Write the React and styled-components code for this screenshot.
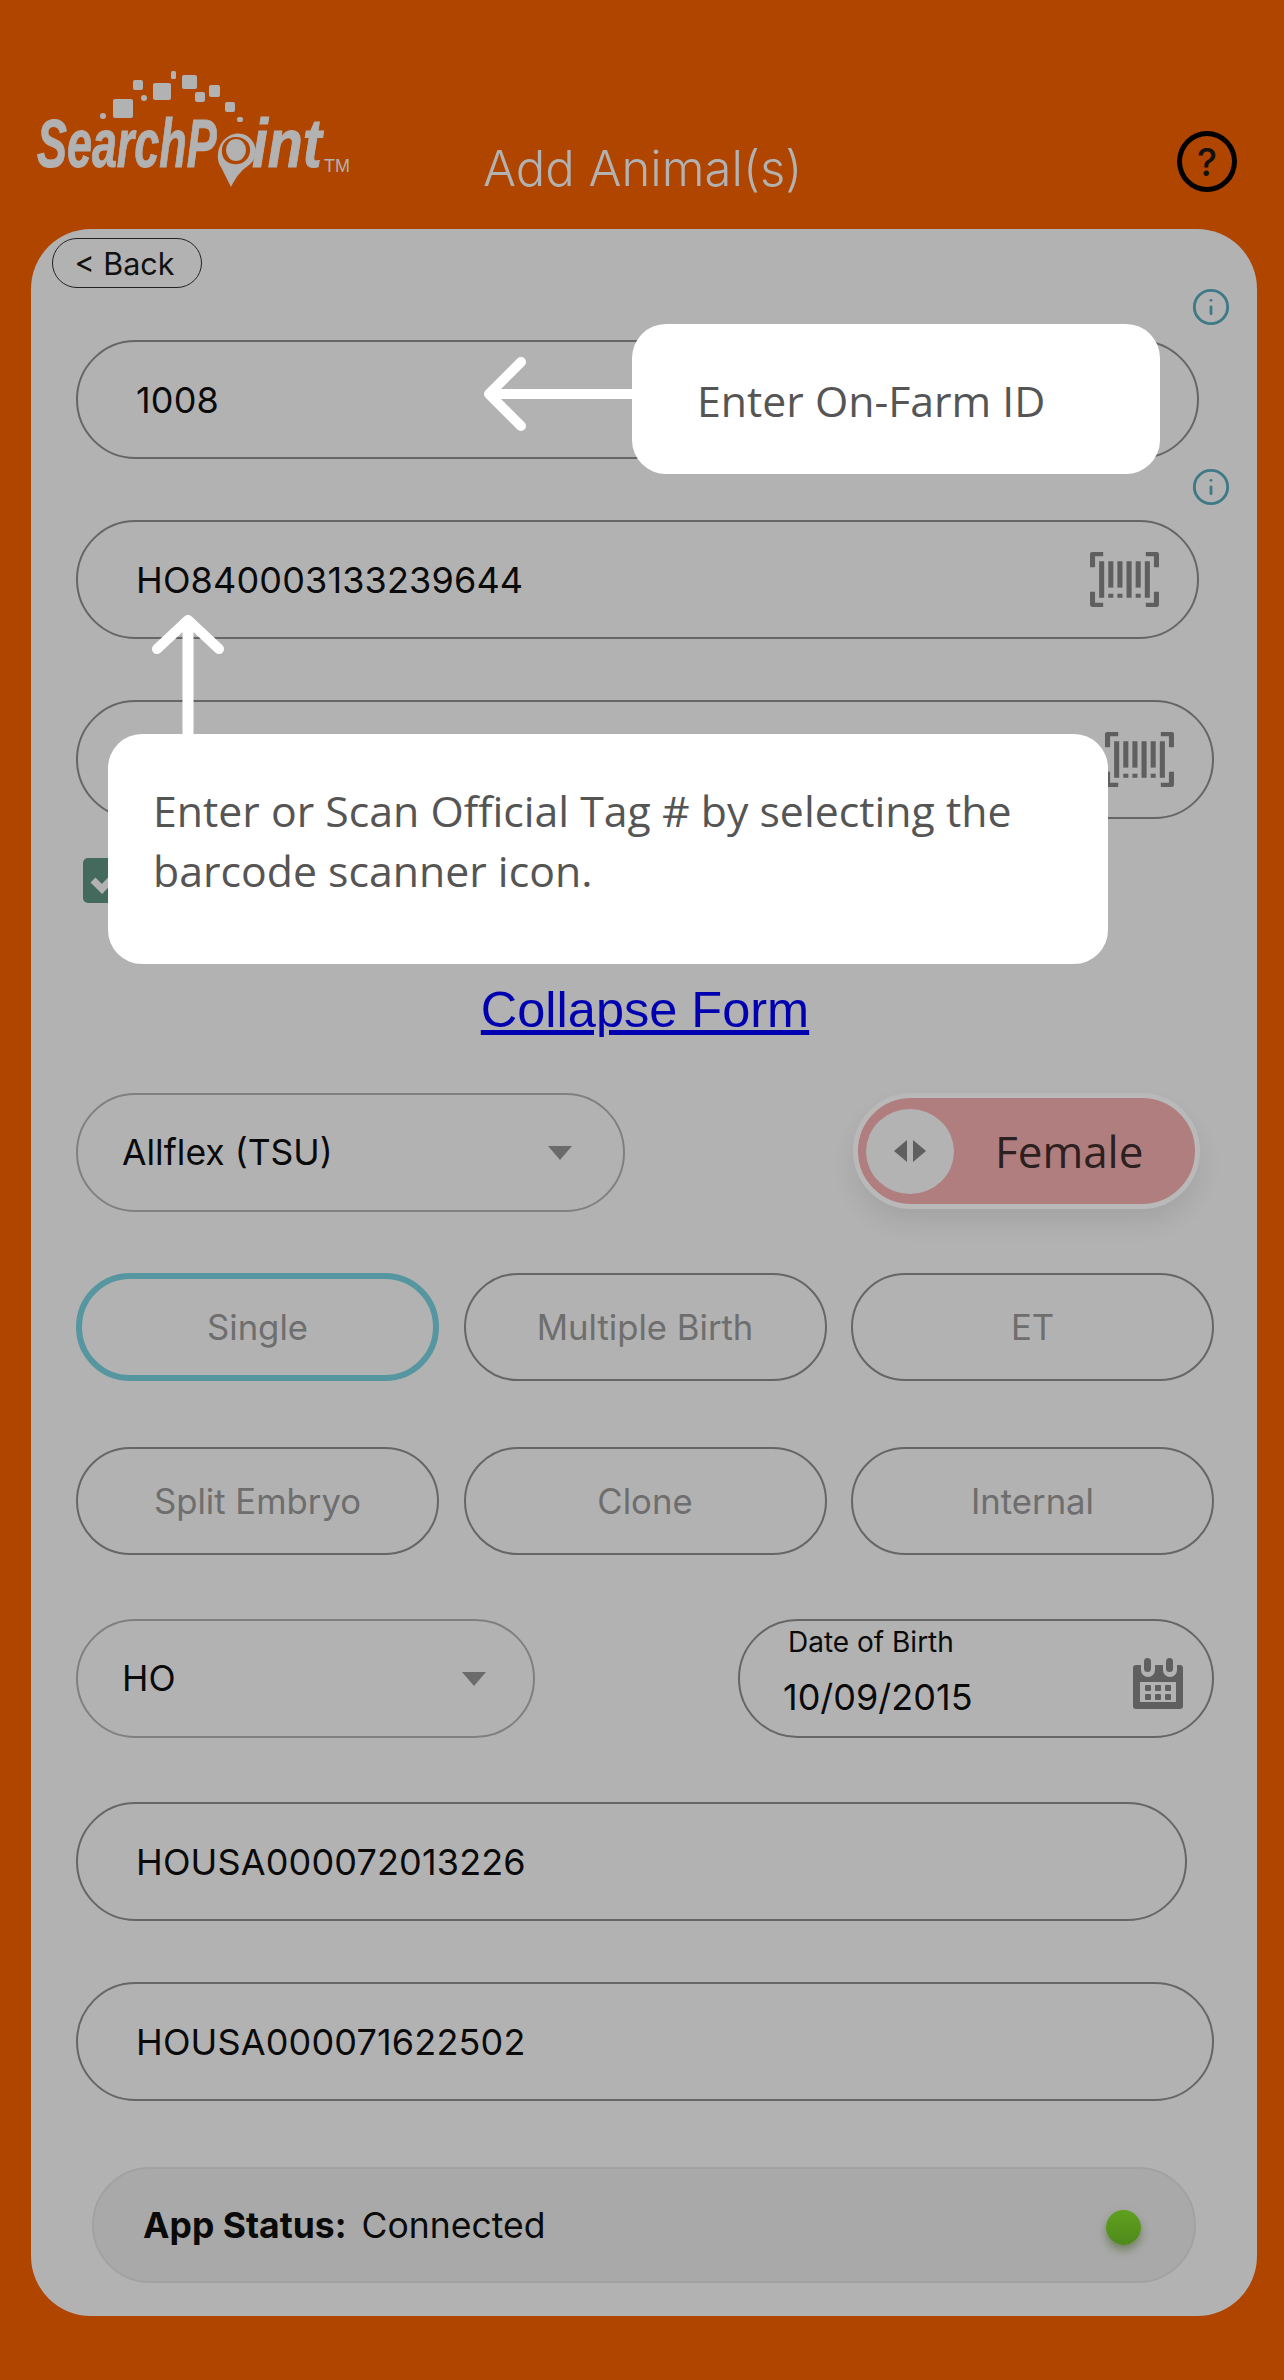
import styled, { createGlobalStyle } from "styled-components";
import { Info } from "lucide-react";

const GlobalStyle = createGlobalStyle`
  html, body { margin: 0; padding: 0; background: #b04500; }
  body { font-family: Inter, "Liberation Sans", sans-serif; }
`;

const Page = styled.div`
  position: relative;
  width: 1284px;
  height: 2380px;
  background: #b04500;
  overflow: hidden;
`;

const Header = styled.header`
  display: flex;
  height: 229px;
  box-sizing: border-box;
`;

const LogoWrap = styled.svg`
  flex: none;
  width: 350px;
  height: 150px;
  margin: 50px 0 0 20px;
`;

const Title = styled.h1`
  margin: 140px 0 0 113px;
  font-size: 49px;
  line-height: 58px;
  font-weight: 300;
  color: #b2b2b2;
  white-space: nowrap;
`;

const HelpButton = styled.div`
  flex: none;
  width: 60px;
  height: 61px;
  box-sizing: border-box;
  margin: 131px 0 0 auto;
  margin-right: 47px;
  border: 5px solid #000;
  border-radius: 50%;
  display: flex;
  align-items: center;
  justify-content: center;
  font-size: 38px;
  font-weight: 500;
  color: #111;
`;

const Panel = styled.main`
  width: 1226px;
  height: 2087px;
  margin-left: 31px;
  box-sizing: border-box;
  padding: 9px 43px 0 45px;
  background: #b2b2b2;
  border-radius: 60px;
  display: flex;
  flex-direction: column;
`;

const BackButton = styled.div`
  width: 150px;
  height: 50px;
  margin-left: -24px;
  box-sizing: border-box;
  padding-right: 5px;
  border: 1.5px solid #222;
  border-radius: 25px;
  display: flex;
  align-items: center;
  justify-content: center;
  font-size: 30.5px;
  color: #111;
`;

const InfoRow = styled.div`
  height: 36px;
  margin: ${(p) => p.$top}px -17px 0 0;
  display: flex;
  justify-content: flex-end;
  align-items: center;
  color: #3e7a85;
`;

const Field = styled.div`
  flex: none;
  height: 119px;
  margin-top: ${(p) => p.$top}px;
  margin-right: ${(p) => p.$inset || 0}px;
  box-sizing: border-box;
  padding: 0 38px 0 58px;
  border: 2px solid #666;
  border-radius: 60px;
  display: flex;
  align-items: center;
  justify-content: space-between;
  font-size: 36px;
  letter-spacing: 0.15px;
  color: #0a0a0a;
`;

const Scan = styled.svg`
  width: 69px;
  height: 55px;
  color: #5f5f5f;
`;

const CheckRow = styled.div`
  margin: 39px 0 0 7px;
  height: 45px;
`;

const CheckBox = styled.div`
  width: 45px;
  height: 45px;
  border-radius: 5px;
  background: #436a5c;
  display: flex;
  align-items: center;
  justify-content: center;
  color: #b2b2b2;
`;

const CollapseLink = styled.a`
  align-self: center;
  margin-top: 78px;
  font-family: "Liberation Sans", Arial, sans-serif;
  font-size: 50.5px;
  line-height: 58px;
  color: #0000b0;
  text-decoration: underline;
`;

const SplitRow = styled.div`
  display: flex;
  justify-content: space-between;
  align-items: flex-start;
  margin-top: ${(p) => p.$top}px;
`;

const Select = styled.div`
  width: ${(p) => p.$width}px;
  height: 119px;
  box-sizing: border-box;
  padding: 0 ${(p) => p.$caretRight}px 0 44px;
  border: 2px solid #808080;
  border-radius: 60px;
  display: flex;
  align-items: center;
  justify-content: space-between;
  font-size: 35.5px;
  color: #0a0a0a;
`;

const Caret = styled.span`
  width: 0;
  height: 0;
  border-left: 12px solid transparent;
  border-right: 12px solid transparent;
  border-top: 14px solid #6b6b6b;
`;

const Toggle = styled.div`
  width: 347px;
  height: 116px;
  margin-right: 14px;
  box-sizing: border-box;
  padding: 0 0 0 8px;
  border: 5px solid #b9b9b9;
  border-radius: 58px;
  background: #b07e7e;
  box-shadow: 0 14px 24px rgba(0, 0, 0, 0.08);
  display: flex;
  align-items: center;
  font-family: "Open Sans", sans-serif;
  font-size: 44px;
  color: #2c2020;
`;

const Knob = styled.div`
  flex: none;
  width: 88px;
  height: 85px;
  margin-right: 41px;
  border-radius: 50%;
  background: #b3b3b3;
  display: flex;
  align-items: center;
  justify-content: center;
  color: #5f5f5f;
`;

const ChoiceGrid = styled.div`
  display: grid;
  grid-template-columns: repeat(3, 363px);
  justify-content: space-between;
  margin-top: ${(p) => p.$top}px;
`;

const Choice = styled.div`
  height: 108px;
  box-sizing: border-box;
  border: ${(p) => (p.$active ? "6px solid #5596a0" : "2px solid #666")};
  border-radius: 54px;
  display: flex;
  align-items: center;
  justify-content: center;
  font-size: 34.7px;
  color: #6e6e6e;
`;

const DateField = styled.div`
  position: relative;
  width: 476px;
  height: 119px;
  box-sizing: border-box;
  padding: 9px 29px 0 43px;
  border: 2px solid #666;
  border-radius: 60px;
  display: flex;
  justify-content: space-between;
  align-items: center;
`;

const DateText = styled.div`
  display: flex;
  flex-direction: column;
  align-self: flex-start;
`;

const DateLabel = styled.span`
  margin-left: 5px;
  margin-top: -5px;
  font-size: 28px;
  line-height: 34px;
  color: #0a0a0a;
`;

const DateValue = styled.span`
  margin-top: 16px;
  font-size: 36px;
  line-height: 44px;
  color: #0a0a0a;
`;

const StatusBar = styled.div`
  height: 116px;
  margin: 66px 18px 0 16px;
  box-sizing: border-box;
  padding: 0 53px 0 49px;
  border: 2px solid #a2a2a2;
  border-radius: 58px;
  background: #a9a9a9;
  display: flex;
  align-items: center;
  font-size: 35.5px;
  color: #0a0a0a;
`;

const StatusKey = styled.b`
  margin-right: 15px;
  font-weight: 700;
`;

const StatusDot = styled.span`
  width: 35px;
  height: 35px;
  margin: 4px 0 0 auto;
  border-radius: 50%;
  background: linear-gradient(#5fa01e, #4f8a1c);
  box-shadow: 0 5px 8px rgba(60, 90, 30, 0.5);
`;

const Callout = styled.div`
  position: absolute;
  left: ${(p) => p.$left}px;
  top: ${(p) => p.$top}px;
  width: ${(p) => p.$width}px;
  height: ${(p) => p.$height}px;
  box-sizing: border-box;
  padding: ${(p) => p.$pad};
  background: #fff;
  border-radius: 34px;
  font-family: "Open Sans", sans-serif;
  font-size: 42.8px;
  line-height: 60px;
  color: #555;
`;

const Arrow = styled.svg`
  position: absolute;
  color: #fff;
`;

const ArrowLeft = styled(Arrow)`
  left: -152px;
  top: 28px;
`;

const ArrowUp = styled(Arrow)`
  left: 38px;
  top: -126px;
`;

const logoFont = {
  fontFamily: "Liberation Sans, sans-serif",
  fontWeight: 700,
  fontStyle: "italic",
  fontSize: 68,
  stroke: "#b2b2b2",
  strokeWidth: 1,
};

const Logo = () => (
  <LogoWrap viewBox="0 0 350 150" fill="#b2b2b2">
    <rect x="93" y="49" width="20" height="19" rx="2" />
    <circle cx="83" cy="66" r="3" />
    <rect x="113" y="30" width="10" height="10" rx="2" />
    <circle cx="124" cy="48" r="3" />
    <rect x="133" y="33" width="18" height="17" rx="2" />
    <rect x="151" y="21" width="5" height="8" rx="1.5" />
    <rect x="162" y="25" width="15" height="14" rx="2" />
    <rect x="175" y="42" width="10" height="10" rx="2" />
    <rect x="189" y="35" width="11" height="12" rx="2" />
    <rect x="205" y="52" width="10" height="10" rx="2" />
    <rect x="217" y="67" width="6" height="5" rx="2" />
    <text transform="translate(17 117) scale(0.66 1)" {...logoFont}>
      SearchP
    </text>
    <text transform="translate(232 117) scale(0.84 1)" {...logoFont}>
      int
    </text>
    <path
      fillRule="evenodd"
      d="M211 137 L201 117 C196 110 197 98 203 91 C212 81 226 81 233 92 C238 100 236 110 229 115 C222 120 217 125 211 137 Z M216 87 C206 87 201 95 202 103 C203 112 211 115 218 114 C226 113 231 106 230 98 C229 91 223 87 216 87 Z"
    />
    <ellipse cx="216" cy="100" rx="10" ry="11" />
    <text x="304" y="122" fontFamily="Liberation Sans, sans-serif" fontSize="18">
      TM
    </text>
  </LogoWrap>
);

const BarcodeIcon = () => (
  <Scan viewBox="0 0 68 54" fill="currentColor">
    <path d="M0 15V2a2 2 0 0 1 2-2h11v4H5v11zM68 15V2a2 2 0 0 0-2-2H55v4h8v11zM0 39v13a2 2 0 0 0 2 2h11v-4H5V39zM68 39v13a2 2 0 0 1-2 2H55v-4h8V39z" />
    <rect x="9" y="9" width="5" height="36" />
    <rect x="18" y="9" width="5" height="26" />
    <rect x="18" y="41" width="5" height="4" />
    <rect x="27" y="9" width="5" height="26" />
    <rect x="27" y="41" width="5" height="4" />
    <rect x="36" y="9" width="5" height="36" />
    <rect x="45" y="9" width="5" height="26" />
    <rect x="45" y="41" width="5" height="4" />
    <rect x="54" y="9" width="5" height="36" />
  </Scan>
);

const CalendarIcon = () => (
  <svg width="50" height="51" viewBox="0 0 50 51" fill="#5f5f5f">
    <path
      fillRule="evenodd"
      d="M3 7h5v5a7 7 0 0 0 14 0V7h8v5a7 7 0 0 0 14 0V7h3a3 3 0 0 1 3 3v38a3 3 0 0 1-3 3H3a3 3 0 0 1-3-3V10a3 3 0 0 1 3-3zM7 24v20h36V24z"
    />
    <rect x="11" y="0" width="7" height="14" rx="3.5" />
    <rect x="33" y="0" width="7" height="14" rx="3.5" />
    <rect x="12" y="27" width="6" height="6" rx="1" />
    <rect x="22" y="27" width="6" height="6" rx="1" />
    <rect x="32" y="27" width="6" height="6" rx="1" />
    <rect x="12" y="36" width="6" height="6" rx="1" />
    <rect x="22" y="36" width="6" height="6" rx="1" />
    <rect x="32" y="36" width="6" height="6" rx="1" />
  </svg>
);

const App = () => {
  return (
    <Page>
      <GlobalStyle />
      <Header>
        <Logo />
        <Title>Add Animal(s)</Title>
        <HelpButton>?</HelpButton>
      </Header>
      <Panel>
        <BackButton>&lt; Back</BackButton>
        <InfoRow $top={1}>
          <Info size={40} strokeWidth={1.7} />
        </InfoRow>
        <Field $top={15} $inset={15}>
          1008
        </Field>
        <InfoRow $top={10}>
          <Info size={40} strokeWidth={1.7} />
        </InfoRow>
        <Field $top={15} $inset={15}>
          HO840003133239644
          <BarcodeIcon />
        </Field>
        <Field $top={61}>
          <span />
          <BarcodeIcon />
        </Field>
        <CheckRow>
          <CheckBox>
            <svg width="32" height="26" viewBox="0 0 32 26" fill="none" stroke="currentColor" strokeWidth="7">
              <path d="M3 12l9 9L28 4" />
            </svg>
          </CheckBox>
        </CheckRow>
        <CollapseLink href="#">Collapse Form</CollapseLink>
        <SplitRow $top={54}>
          <Select $width={549} $caretRight={51}>
            Allflex (TSU)
            <Caret />
          </Select>
          <Toggle>
            <Knob>
              <svg width="32" height="22" viewBox="0 0 32 22" fill="currentColor">
                <path d="M13 0v22L0 11zM19 0v22l13-11z" />
              </svg>
            </Knob>
            Female
          </Toggle>
        </SplitRow>
        <ChoiceGrid $top={61}>
          <Choice $active>Single</Choice>
          <Choice>Multiple Birth</Choice>
          <Choice>ET</Choice>
        </ChoiceGrid>
        <ChoiceGrid $top={66}>
          <Choice>Split Embryo</Choice>
          <Choice>Clone</Choice>
          <Choice>Internal</Choice>
        </ChoiceGrid>
        <SplitRow $top={64}>
          <Select $width={459} $caretRight={47}>
            HO
            <Caret />
          </Select>
          <DateField>
            <DateText>
              <DateLabel>Date of Birth</DateLabel>
              <DateValue>10/09/2015</DateValue>
            </DateText>
            <CalendarIcon />
          </DateField>
        </SplitRow>
        <Field $top={64} $inset={27}>
          HOUSA000072013226
        </Field>
        <Field $top={61}>HOUSA000071622502</Field>
        <StatusBar>
          <StatusKey>App Status:</StatusKey>
          Connected
          <StatusDot />
        </StatusBar>
      </Panel>
      <Callout $left={632} $top={324} $width={528} $height={150} $pad="47px 0 0 65px">
        <ArrowLeft width="160" height="84" viewBox="0 0 160 84" fill="none" stroke="currentColor" strokeLinecap="round" strokeLinejoin="round">
          <path d="M152 42H10" strokeWidth="10" />
          <path d="M41 10L9 42l32 32" strokeWidth="10" />
        </ArrowLeft>
        Enter On-Farm ID
      </Callout>
      <Callout $left={108} $top={734} $width={1000} $height={230} $pad="47px 40px 0 45px">
        <ArrowUp width="84" height="130" viewBox="0 0 84 130" fill="none" stroke="currentColor" strokeLinecap="round" strokeLinejoin="round">
          <path d="M42 130V14" strokeWidth="11" />
          <path d="M11 41L42 12l31 29" strokeWidth="10" />
        </ArrowUp>
        Enter or Scan Official Tag # by selecting the barcode scanner icon.
      </Callout>
    </Page>
  );
};

export default App;
